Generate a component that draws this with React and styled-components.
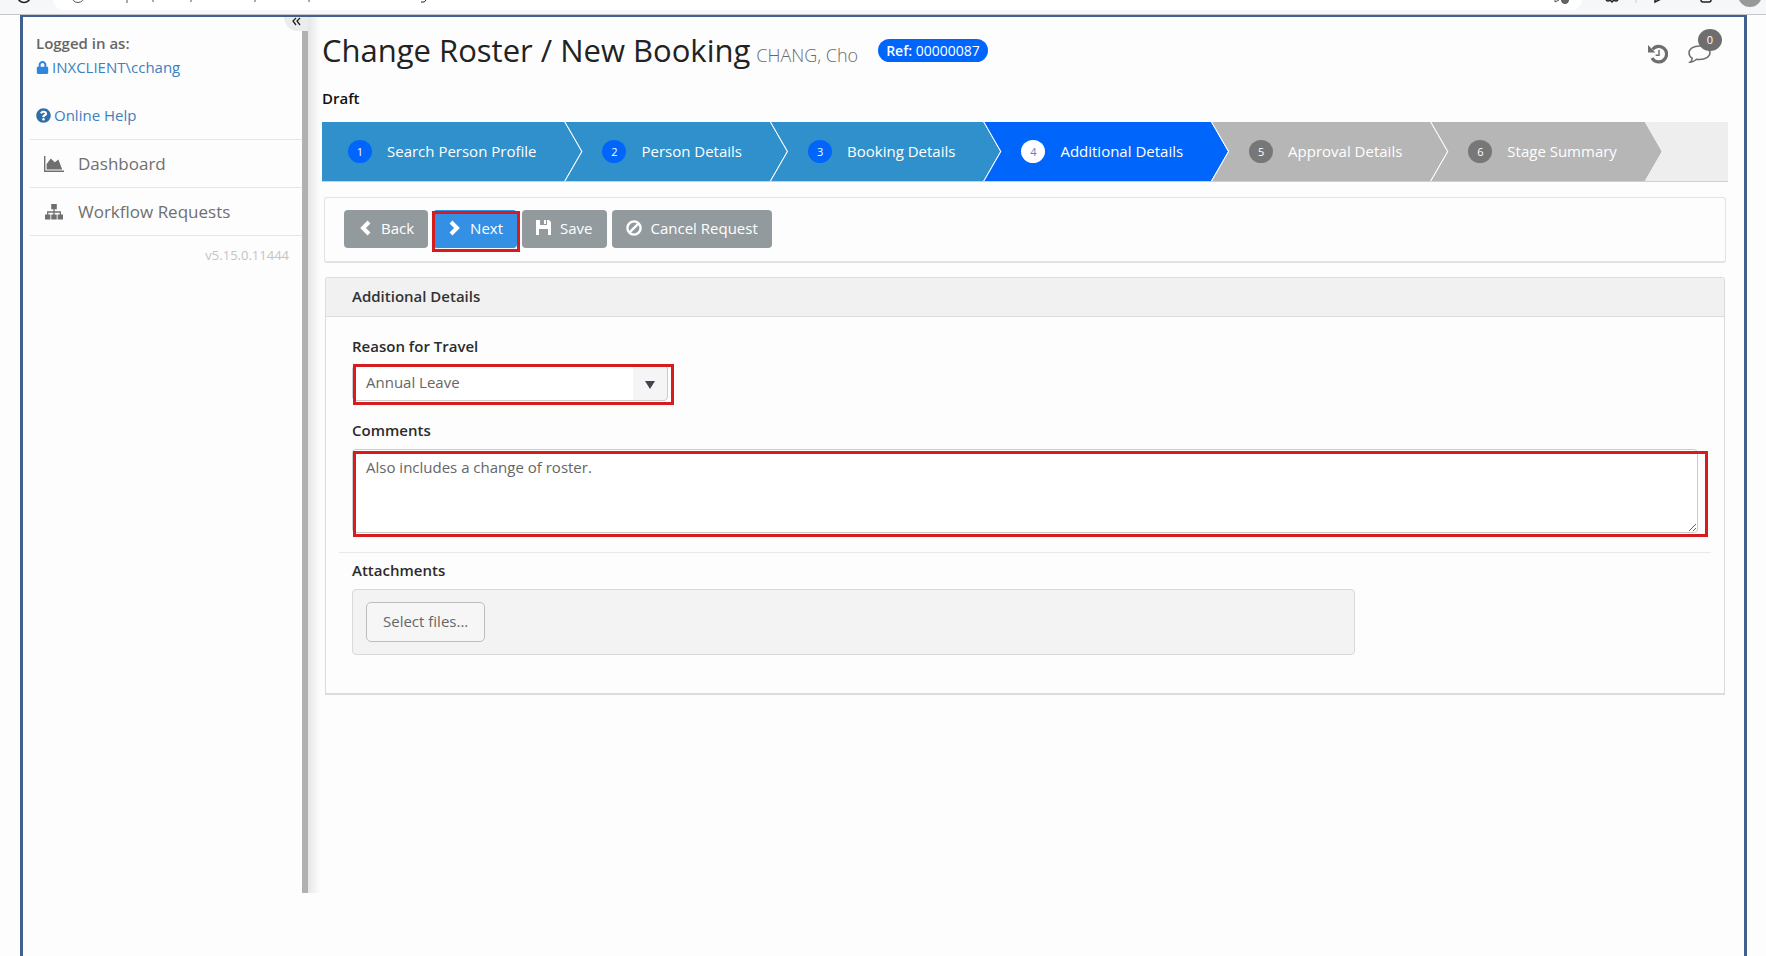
import React from 'react';
import styled, { createGlobalStyle, css } from 'styled-components';
import { FaLock, FaQuestionCircle } from 'react-icons/fa';

const GlobalStyle = createGlobalStyle`
  * {
    box-sizing: border-box;
  }
  body {
    margin: 0;
    background: #fdfdfd;
    color: #2b2b2b;
    font-family: "Open Sans", "Noto Sans", sans-serif;
    font-size: 15px;
    line-height: 20px;
  }
  button, select, textarea {
    font: inherit;
  }
`;

const BrowserBar = styled.div`
  display: flex;
  justify-content: space-between;
  height: 15px;
  overflow: hidden;
  background: #f6f7f8;
  border-bottom: 1px solid #c3c5c9;
  svg {
    flex: none;
    display: block;
  }
`;

const AddressBar = styled.div`
  flex: 1;
  display: flex;
  justify-content: space-between;
  height: 10px;
  background: #fff;
  border-radius: 0 0 14px 14px;
`;

const Frame = styled.div`
  display: flex;
  align-items: flex-start;
  min-height: calc(100vh - 15px);
  margin: 0 19px 0 20px;
  border: 3px solid #40608f;
  border-top-width: 2px;
  border-bottom: 0;
`;

const Sidebar = styled.aside`
  flex: none;
  display: flex;
  flex-direction: column;
  align-items: flex-end;
  width: 285px;
  height: calc(100vh - 80px);
`;

const Collapse = styled.button`
  display: flex;
  align-items: flex-start;
  width: 24px;
  height: 14px;
  padding: 0 0 0 8px;
  border: 0;
  border-radius: 0 0 0 14px;
  background: #ececec;
  color: #222;
`;

const SidebarBody = styled.div`
  flex: 1;
  width: 100%;
  padding-left: 7px;
  border-right: 6px solid #b1b1b1;
`;

const Account = styled.div`
  display: flex;
  flex-direction: column;
  padding: 0 0 12px 6px;
  line-height: 24px;
  color: #666;
  font-weight: 600;
`;

const AccountLink = styled.a`
  display: flex;
  align-items: center;
  gap: 3px;
  margin-bottom: ${props => (props.$spaced ? 24 : 0)}px;
  color: #3c80bd;
  font-weight: 400;
  text-decoration: none;
`;

const NavLink = styled.a`
  display: flex;
  align-items: center;
  gap: 14px;
  height: 48px;
  padding-left: 14px;
  border-top: 1px solid #e6e6e6;
  color: #6f6f6f;
  font-size: 17px;
  text-decoration: none;
  svg {
    width: 20px;
  }
`;

const Version = styled.div`
  padding: 9px 13px 0 0;
  border-top: 1px solid #e6e6e6;
  color: #c4c4c4;
  font-size: 13px;
  text-align: right;
`;

const Main = styled.main`
  flex: 1;
  align-self: stretch;
  min-width: 0;
  padding: 12px 16px 40px 14px;
  background: linear-gradient(to right, #e6e6e6, #fdfdfd) 0 0 / 12px calc(100vh - 80px) no-repeat;
`;

const PageHeader = styled.header`
  display: flex;
  align-items: center;
  height: 46px;
`;

const Title = styled.h1`
  margin: 0;
  color: #222;
  font-size: 31px;
  font-weight: 400;
  line-height: 40px;
  small {
    margin-left: 6px;
    color: #6a6a6a;
    font-size: 18px;
    font-weight: 300;
  }
`;

const RefBadge = styled.span`
  margin: 0 0 4px 20px;
  padding: 0 8px;
  border-radius: 12px;
  background: #0066fb;
  color: #fff;
  font-size: 14px;
  line-height: 23px;
  b {
    font-weight: 600;
  }
`;

const HeaderTools = styled.div`
  display: flex;
  align-items: center;
  gap: 20px;
  margin: 4px 17px 0 auto;
`;

const ToolButton = styled.button`
  position: relative;
  display: flex;
  padding: 0;
  border: 0;
  background: none;
  color: #6e6e6e;
`;

const Count = styled.span`
  position: absolute;
  left: 10px;
  top: -16px;
  width: 24px;
  border-radius: 50%;
  background: #6e6e6e;
  color: #fff;
  font-size: 11px;
  line-height: 22px;
`;

const Status = styled.div`
  padding: 13px 0 14px;
  color: #111;
  font-weight: 600;
`;

const Steps = styled.ol`
  display: flex;
  margin: 0;
  padding: 0;
  list-style: none;
  background: #eee;
  border-bottom: 1px solid #d0d0d0;
`;

const stepColors = {
  done: { bar: '#3090cc', dot: '#0066fb', digit: '#fff' },
  active: { bar: '#0066fb', dot: '#fff', digit: '#5a7fd0' },
  todo: { bar: '#b6b6b6', dot: '#777', digit: '#fff' },
};

const arrow = css`
  clip-path: polygon(0 0, calc(100% - 17px) 0, 100% 50%, calc(100% - 17px) 100%, 0 100%, 17px 50%);
`;

const arrowStart = css`
  clip-path: polygon(0 0, calc(100% - 17px) 0, 100% 50%, calc(100% - 17px) 100%, 0 100%);
`;

const Step = styled.li`
  margin-left: ${props => (props.$first ? 0 : -17)}px;
  padding-left: ${props => (props.$first ? 0 : 1)}px;
  background: #fff;
  ${props => (props.$first ? arrowStart : arrow)}
`;

const StepLabel = styled.div`
  display: flex;
  align-items: center;
  gap: 15px;
  height: 59px;
  padding: 0 45px 1px ${props => (props.$first ? 26 : 37)}px;
  background: ${props => stepColors[props.$state].bar};
  color: #fff;
  white-space: nowrap;
  ${props => (props.$first ? arrowStart : arrow)}
`;

const StepNumber = styled.span`
  width: 24px;
  border-radius: 50%;
  background: ${props => stepColors[props.$state].dot};
  color: ${props => stepColors[props.$state].digit};
  font-size: 11px;
  line-height: 23px;
  text-align: center;
`;

const Toolbar = styled.div`
  display: flex;
  gap: 5px;
  margin: 15px 2px 14px;
  padding: 12px 19px 13px;
  border: 1px solid #e3e3e3;
  border-bottom-width: 2px;
  border-radius: 3px;
`;

const ActionButton = styled.button`
  display: flex;
  align-items: center;
  gap: 9px;
  height: 38px;
  padding: 0 14px 2px;
  border: 0;
  border-radius: 4px;
  background: ${props => (props.$primary ? '#3490e4' : '#929a9e')};
  color: #fff;
`;

const Marked = styled.div`
  position: relative;
  width: ${props => props.$width || 'auto'};
`;

// red call-out drawn over a control
const Callout = styled.span`
  position: absolute;
  inset: ${props => props.$inset};
  border: 3px solid #d51d20;
  pointer-events: none;
`;

const Card = styled.section`
  margin: 0 3px;
  border: 1px solid #dcdcdc;
  border-bottom-width: 2px;
  border-radius: 3px 3px 0 0;
`;

const CardTitle = styled.h2`
  margin: 0;
  padding: 8px 26px 10px;
  border-bottom: 1px solid #dcdcdc;
  background: #f1f1f1;
  color: #333;
  font-size: 15px;
  font-weight: 600;
  line-height: 20px;
`;

const CardBody = styled.div`
  padding: 19px 13px 38px;
`;

const Field = styled.div`
  width: ${props => props.$width || 'auto'};
  padding: 0 13px;
  margin-bottom: ${props => props.$gap || 0}px;
`;

const Label = styled.label`
  display: block;
  margin-bottom: 9px;
  color: #2b2b2b;
  font-weight: 600;
`;

const Select = styled.select`
  display: block;
  width: 316px;
  height: 36px;
  padding: 0 13px 2px;
  border: 1px solid #ccc;
  border-radius: 4px;
  background: linear-gradient(#f5f5f5, #f5f5f5) right / 34px 100% no-repeat #fff;
  color: #666;
  appearance: none;
`;

const Caret = styled.svg`
  position: absolute;
  top: 16px;
  left: 293px;
  pointer-events: none;
`;

const TextArea = styled.textarea`
  display: block;
  width: 100%;
  height: 84px;
  padding: 7px 13px;
  border: 1px solid #ccc;
  border-radius: 4px;
  background: #fff;
  color: #666;
`;

const Divider = styled.hr`
  margin: 0 0 7px;
  border: 0;
  border-top: 1px solid #e9e9e9;
`;

const Upload = styled.div`
  padding: 12px 13px;
  border: 1px solid #d9d9d9;
  border-radius: 4px;
  background: #f3f3f3;
`;

const UploadButton = styled.button`
  height: 40px;
  padding: 0 16px 2px;
  border: 1px solid #bdbdbd;
  border-radius: 5px;
  background: #f6f6f7;
  color: #666;
`;

const steps = [
  { name: 'Search Person Profile', state: 'done' },
  { name: 'Person Details', state: 'done' },
  { name: 'Booking Details', state: 'done' },
  { name: 'Additional Details', state: 'active' },
  { name: 'Approval Details', state: 'todo' },
  { name: 'Stage Summary', state: 'todo' },
];

const AreaIcon = () => (
  <svg width="20" height="16" viewBox="0 0 20 16" fill="currentColor" aria-hidden="true">
    <path d="M0 0h1.4v14.6H20V16H0z" />
    <path d="M2.6 13.4V8l4.2-5.6 4 3.8 3.6-2.6 3.8 9.8z" />
  </svg>
);

const SitemapIcon = () => (
  <svg width="20" height="16" viewBox="0 0 20 16" aria-hidden="true">
    <path d="M7.2 0h5.6v5.2H7.2zM1 10.4h5.4v5.2H1zM7.3 10.4h5.4v5.2H7.3zM13.6 10.4H19v5.2h-5.4z" fill="currentColor" />
    <path d="M10 5v6M3.7 11V8h12.6v3" fill="none" stroke="currentColor" strokeWidth="1.3" />
  </svg>
);

const ChevronIcon = ({ right }) => (
  <svg width="14" height="16" viewBox="0 0 14 16" fill="none" stroke="currentColor" strokeWidth="4" aria-hidden="true">
    <path d={right ? 'M4 2l6 6-6 6' : 'M11 2L5 8l6 6'} />
  </svg>
);

const SaveIcon = () => (
  <svg width="15" height="16" viewBox="0 0 15 16" fill="currentColor" aria-hidden="true">
    <path d="M0 0h4v5h7V0h2l2 2v13h-3V9H3v6H0z" />
    <path d="M8 0h2v4H8z" />
  </svg>
);

const BanIcon = () => (
  <svg width="16" height="16" viewBox="0 0 16 16" fill="none" stroke="currentColor" strokeWidth="2.4" aria-hidden="true">
    <circle cx="8" cy="8" r="6.6" />
    <path d="M3.6 12.4l8.8-8.8" />
  </svg>
);

const HistoryIcon = () => (
  <svg width="20" height="20" viewBox="0 0 20 20" fill="none" stroke="currentColor" aria-hidden="true">
    <path d="M4.6 5.4A7.8 7.8 0 1 1 4 14" strokeWidth="3.2" />
    <path d="M0 1v7.4h7.4z" fill="currentColor" stroke="none" />
    <path d="M11 6v5.2H7.6" strokeWidth="1.5" />
  </svg>
);

const CommentIcon = () => (
  <svg width="23" height="18" viewBox="0 0 23 18" fill="none" stroke="currentColor" strokeWidth="1.5" aria-hidden="true">
    <path d="M11.5 1C17.4 1 22 3.8 22 7.7s-4.6 6.8-10.5 6.8c-1 0-2-.1-2.9-.3C6.8 15.9 4.6 17 2.2 17.2c1.200-1 1.900-2.300 2-4C2.200 12 1 10 1 7.700 1 3.800 5.600 1 11.500 1z" />
  </svg>
);

const BrowserChrome = () => (
  <BrowserBar>
    <svg width="53" height="13" fill="none" stroke="#222" strokeWidth="1.5" aria-hidden="true">
      <circle cx="24" cy="-4" r="6.5" />
    </svg>
    <AddressBar>
      <svg width="400" height="10" fill="none" stroke="#555" aria-hidden="true">
        <circle cx="25" cy="-4" r="6.5" />
        <path d="M74 0v3M100 0v2M138 0v2M202 0v2M256 0v2" />
        <path d="M368 2q4 1 5-2" stroke="#222" />
      </svg>
      <svg width="40" height="10" fill="none" stroke="#555" aria-hidden="true">
        <path d="M13 0v2l4-2" />
        <circle cx="23" cy="0" r="3.5" fill="#666" />
      </svg>
    </AddressBar>
    <svg width="184" height="13" fill="none" stroke="#222" strokeWidth="1.5" aria-hidden="true">
      <path d="M24 0q2 2 4 0l2 2 2-2q2 2 4 0M73 0v2l6-3M119 0q0 2 2 2h6q2 0 2-2M124 0v-1" />
      <path d="M54 0v3" stroke="#ccc" strokeWidth="1" />
      <circle cx="168" cy="-5" r="12" fill="#999" stroke="none" />
    </svg>
  </BrowserBar>
);

const StepBar = () => (
  <Steps>
    {steps.map((step, i) => (
      <Step key={step.name} $first={i === 0}>
        <StepLabel $first={i === 0} $state={step.state}>
          <StepNumber $state={step.state}>{i + 1}</StepNumber>
          {step.name}
        </StepLabel>
      </Step>
    ))}
  </Steps>
);

const App = () => {
  return (
    <>
      <GlobalStyle />
      <BrowserChrome />
      <Frame>
        <Sidebar>
          <Collapse aria-label="Collapse menu">
            <svg width="10" height="9" fill="none" stroke="currentColor" strokeWidth="1.3" aria-hidden="true">
              <path d="M4 1L1 4l3 4M8 1L5 4l3 4" />
            </svg>
          </Collapse>
          <SidebarBody>
            <Account>
              Logged in as:
              <AccountLink href="#account" $spaced>
                <FaLock size={13} color="#2f86dd" />
                INXCLIENT\cchang
              </AccountLink>
              <AccountLink href="#help">
                <FaQuestionCircle size={15} color="#2f6ea8" />
                Online Help
              </AccountLink>
            </Account>
            <nav>
              <NavLink href="#dashboard"><AreaIcon />Dashboard</NavLink>
              <NavLink href="#requests"><SitemapIcon />Workflow Requests</NavLink>
            </nav>
            <Version>v5.15.0.11444</Version>
          </SidebarBody>
        </Sidebar>
        <Main>
          <PageHeader>
            <Title>Change Roster / New Booking<small>CHANG, Cho</small></Title>
            <RefBadge><b>Ref:</b> 00000087</RefBadge>
            <HeaderTools>
              <ToolButton aria-label="History"><HistoryIcon /></ToolButton>
              <ToolButton aria-label="Comments">
                <CommentIcon />
                <Count>0</Count>
              </ToolButton>
            </HeaderTools>
          </PageHeader>
          <Status>Draft</Status>
          <StepBar />
          <Toolbar>
            <ActionButton><ChevronIcon />Back</ActionButton>
            <Marked>
              <ActionButton $primary><ChevronIcon right />Next</ActionButton>
              <Callout $inset="1px -3px -4px -1px" />
            </Marked>
            <ActionButton><SaveIcon />Save</ActionButton>
            <ActionButton><BanIcon />Cancel Request</ActionButton>
          </Toolbar>
          <Card>
            <CardTitle>Additional Details</CardTitle>
            <CardBody>
              <Field $gap={19}>
                <Label htmlFor="reason">Reason for Travel</Label>
                <Marked $width="316px">
                  <Select id="reason" defaultValue="Annual Leave">
                    <option>Annual Leave</option>
                  </Select>
                  <Caret width="10" height="8" aria-hidden="true">
                    <path d="M0 0h10L5 8z" fill="#445" />
                  </Caret>
                  <Callout $inset="-1px -6px -4px 1px" />
                </Marked>
              </Field>
              <Field $gap={19}>
                <Label htmlFor="comments">Comments</Label>
                <Marked>
                  <TextArea id="comments" defaultValue="Also includes a change of roster." />
                  <Callout $inset="2px -10px -4px 1px" />
                </Marked>
              </Field>
              <Divider />
              <Field $width="75%">
                <Label htmlFor="files">Attachments</Label>
                <Upload>
                  <UploadButton id="files">Select files...</UploadButton>
                </Upload>
              </Field>
            </CardBody>
          </Card>
        </Main>
      </Frame>
    </>
  );
};

export default App;
